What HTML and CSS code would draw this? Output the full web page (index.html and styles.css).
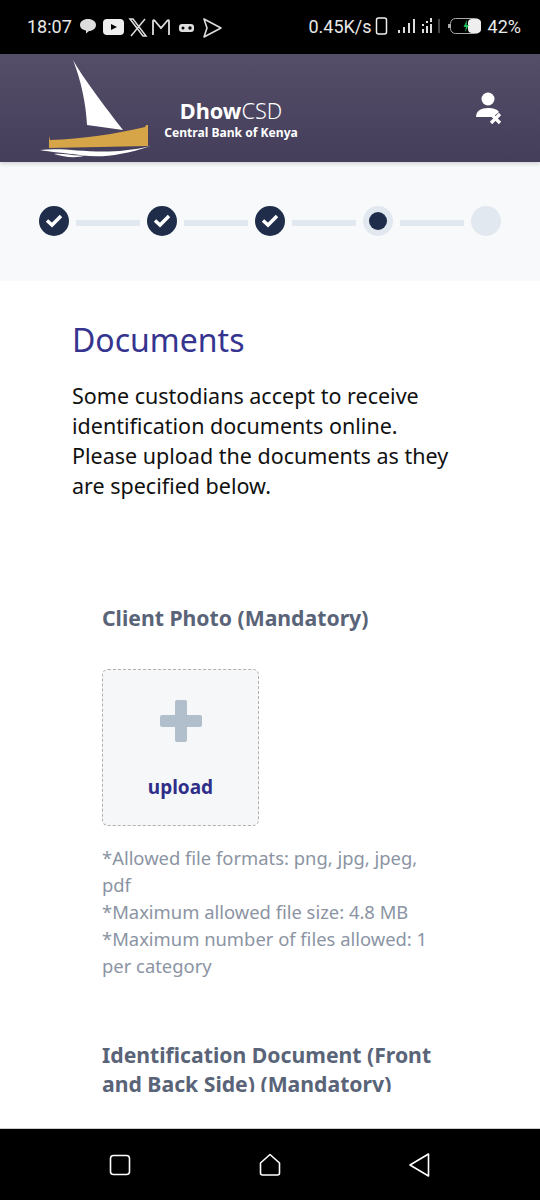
FILE: index.html
```html
<!DOCTYPE html>
<html>
<head>
	<meta charset="utf-8">
	<meta name="viewport" content="width=device-width, initial-scale=1">
	<title>DhowCSD</title>
	<link rel="stylesheet" href="styles.css">
</head>
<body>
	<div class="status">
		<span class="clock">18:07</span>
		<svg class="app-icons" width="143" height="24" viewBox="0 0 143 24">
			<path d="M1 10c0-3.500 3.500-6 8-6s8 2.500 8 6-3.500 6-7 6l-3 2.500 0-3c-3.500-.5-6-2.500-6-5.500z" fill="#ddd"/>
			<rect x="24" y="4" width="21" height="16" rx="4" fill="#eee"/>
			<path d="M32 9l6 3-6 3z" fill="#000"/>
			<path d="M51 4l13 17h3L54 4zM66 4L52 21" stroke="#ddd" stroke-width="1.500" fill="none"/>
			<path d="M74 20V6c0-1 1-1 2 0l6 7 6-7c1-1 2-1 2 0v14" stroke="#ddd" stroke-width="1.800" fill="none"/>
			<rect x="100" y="9" width="15" height="8" rx="3" fill="#ddd"/>
			<circle cx="104" cy="13" r="1.500" fill="#000"/>
			<circle cx="111" cy="13" r="1.700" fill="#000"/>
			<path d="M125 4l17 9-17 9 3-9z" stroke="#ddd" stroke-width="1.600" stroke-linejoin="round" fill="none"/>
		</svg>
		<span class="speed">0.45K/s</span>
		<svg class="sys-icons" width="107" height="24" viewBox="0 0 107 24">
			<rect x="1.500" y="3" width="10" height="16" rx="2" stroke="#eee" stroke-width="1.500" fill="none"/>
			<g fill="#ddd">
				<rect x="23" y="15" width="2" height="3"/><rect x="28" y="12" width="2" height="6"/>
				<rect x="33" y="8" width="2" height="10"/><rect x="38" y="4" width="2" height="14"/>
				<rect x="47" y="9" width="2" height="2"/><rect x="47" y="14" width="2" height="4"/>
				<rect x="51" y="6" width="2" height="2"/><rect x="51" y="11" width="2" height="7"/>
				<rect x="55" y="3" width="2" height="4"/><rect x="55" y="9" width="2" height="9"/>
			</g>
			<rect x="63" y="4" width="2" height="14" fill="#444"/>
			<rect x="73" y="9" width="2" height="4" fill="#aaa"/>
			<rect x="75.500" y="3.500" width="30" height="15" rx="5" stroke="#aaa" fill="none"/>
			<rect x="93" y="4" width="13" height="14" rx="4" fill="#eee"/>
			<path d="M92 5l-3.500 7h2.500l-1 5 4-7h-2.500z" fill="#22c55e"/>
		</svg>
		<span class="batt">42%</span>
	</div>

	<div class="topbar">
		<svg class="boat" width="114" height="102" viewBox="0 0 114 102">
			<path d="M33 4C43 22 66 52 83 74L47 69C46 48 41 24 33 4z" fill="#fff"/>
			<path d="M9 80l1 4c32-1 66-6 95-13l1-2 2 0 0 21-99 2z" fill="#d6a548"/>
			<path d="M0 94C30 90 60 102 111 90 80 100 60 102 40 99 25 97 10 96 0 94z" fill="#fff"/>
			<path d="M14 98C25 97 35 101 47 99 35 103 25 101 14 98z" fill="#fff"/>
		</svg>
		<div class="brand">
			<div class="brand-name"><b>Dhow</b>CSD</div>
			<div class="brand-sub">Central Bank of Kenya</div>
		</div>
		<svg class="user-x" width="28" height="36" viewBox="0 0 28 36">
			<circle cx="13" cy="9" r="6.500" fill="#fff"/>
			<path d="M1 27c0-6 5-9 12-9 5 0 9 1 11 4l-6 5z" fill="#fff"/>
			<path d="M16 24l9 9M25 24l-9 9" stroke="#fff" stroke-width="3.200"/>
		</svg>
	</div>

	<div class="steps">
		<span class="step done"><svg width="18" height="15" viewBox="0 0 18 15"><path d="M2 7.500l5 4.500L16 3" stroke="#fff" stroke-width="3.500" fill="none"/></svg></span>
		<span class="line"></span>
		<span class="step done"><svg width="18" height="15" viewBox="0 0 18 15"><path d="M2 7.500l5 4.500L16 3" stroke="#fff" stroke-width="3.500" fill="none"/></svg></span>
		<span class="line"></span>
		<span class="step done"><svg width="18" height="15" viewBox="0 0 18 15"><path d="M2 7.500l5 4.500L16 3" stroke="#fff" stroke-width="3.500" fill="none"/></svg></span>
		<span class="line"></span>
		<span class="step current"><i></i></span>
		<span class="line"></span>
		<span class="step"></span>
	</div>

	<div class="main">
		<div class="content">
			<h1>Documents</h1>
			<p class="intro">Some custodians accept to receive identification documents online. Please upload the documents as they are specified below.</p>
			<div class="doc">
				<h2>Client Photo (Mandatory)</h2>
				<div class="upload">
					<svg width="44" height="44" viewBox="0 0 44 44"><path d="M16 3a2 2 0 0 1 2-2h8a2 2 0 0 1 2 2v13h13a2 2 0 0 1 2 2v8a2 2 0 0 1-2 2H28v13a2 2 0 0 1-2 2h-8a2 2 0 0 1-2-2V28H3a2 2 0 0 1-2-2v-8a2 2 0 0 1 2-2h13z" fill="#b1bfcd"/></svg>
					<span>upload</span>
				</div>
				<p class="hint">*Allowed file formats: png, jpg, jpeg, pdf<br>*Maximum allowed file size: 4.8 MB<br>*Maximum number of files allowed: 1 per category</p>
				<h2 class="second">Identification Document (Front and Back Side) (Mandatory)</h2>
			</div>
		</div>
	</div>

	<div class="navbar">
		<svg width="24" height="24" viewBox="0 0 24 24"><rect x="2.500" y="2.500" width="19" height="19" rx="3" stroke="#fff" stroke-width="1.600" fill="none"/></svg>
		<svg width="24" height="24" viewBox="0 0 24 24"><path d="M12 1.500L21.500 10v10a2 2 0 0 1-2 2h-15a2 2 0 0 1-2-2V10z" stroke="#fff" stroke-width="1.600" stroke-linejoin="round" fill="none"/></svg>
		<svg width="24" height="24" viewBox="0 0 24 24"><path d="M20.500 1v22L2 12z" stroke="#fff" stroke-width="1.600" stroke-linejoin="round" fill="none"/></svg>
	</div>
</body>
</html>
```

FILE: styles.css
```css
*{
	box-sizing: border-box;
}
body{
	margin: 0;
	width: 540px;
	height: 1200px;
	overflow: hidden;
	display: flex;
	flex-direction: column;
	background: #fff;
	font-family: "Noto Sans", sans-serif;
}
.status{
	height: 54px;
	background: #000;
	color: #e8e8e8;
	display: flex;
	align-items: center;
	padding: 0 19px 1px 27px;
	font-family: Roboto, sans-serif;
	font-size: 18px;
}
.app-icons{
	margin-left: 7px;
	flex: none;
}
.speed{
	margin-left: auto;
	margin-right: 3px;
}
.sys-icons{
	margin-right: 6px;
	flex: none;
}
.topbar{
	height: 108px;
	background: linear-gradient(#544e68, #443e5b);
	display: flex;
	align-items: flex-start;
	padding-left: 40px;
	box-shadow: 0 2px 4px rgba(0, 0, 0, 0.15);
	position: relative;
}
.boat{
	flex: none;
	margin-top: 2px;
}
.brand{
	margin-left: 10px;
	margin-top: 44px;
	color: #fff;
	width: 134px;
	text-align: center;
}
.brand-name{
	font-size: 21.700px;
	line-height: 26px;
	font-weight: 300;
}
.brand-name b{
	font-weight: 700;
}
.brand-sub{
	font-size: 12.100px;
	line-height: 18px;
	font-weight: 700;
	white-space: nowrap;
}
.user-x{
	margin-left: auto;
	margin-right: 37px;
	margin-top: 36px;
}
.steps{
	height: 119px;
	background: #f7f9fb;
	display: flex;
	align-items: center;
	padding: 0 39px 2px;
}
.step{
	width: 30px;
	height: 30px;
	border-radius: 50%;
	background: #e2e8f0;
	flex: none;
	display: flex;
	align-items: center;
	justify-content: center;
}
.step.done{
	background: #1f2d4a;
}
.step i{
	width: 18px;
	height: 18px;
	border-radius: 50%;
	background: #1f2d4a;
}
.line{
	flex: 1;
	height: 6px;
	margin: 4px 7px 0;
	background: #e2e8f0;
}
.main{
	height: 847px;
	background: #fff;
	padding-bottom: 36px;
}
.content{
	height: 811px;
	overflow: hidden;
	padding: 38px 72px 0;
}
h1{
	margin: 0;
	font-size: 32px;
	line-height: 42px;
	font-weight: 400;
	color: #35348f;
}
.intro{
	margin: 20px 0 0;
	font-size: 21.500px;
	line-height: 30px;
	color: #111;
}
.doc{
	padding: 0 30px;
	margin-top: 102px;
}
h2{
	margin: 0;
	font-size: 21.200px;
	line-height: 29px;
	font-weight: 700;
	color: #5a6478;
}
.upload{
	width: 157px;
	height: 157px;
	margin-top: 37px;
	background: #f6f7f9;
	border: 1.500px dashed #b0b0b0;
	border-radius: 6px;
	display: flex;
	flex-direction: column;
	align-items: center;
	padding-top: 29px;
	color: #2f2f8a;
	font-weight: 700;
	font-size: 19px;
}
.upload span{
	margin-top: 31px;
}
.hint{
	margin: 18px 0 0;
	font-size: 18.400px;
	line-height: 27px;
	color: #8b94a3;
}
.second{
	margin-top: 61px;
}
.navbar{
	height: 72px;
	background: #000;
	border-top: 1px solid #ccc;
	display: flex;
	align-items: center;
	justify-content: center;
	gap: 126px;
}
```
